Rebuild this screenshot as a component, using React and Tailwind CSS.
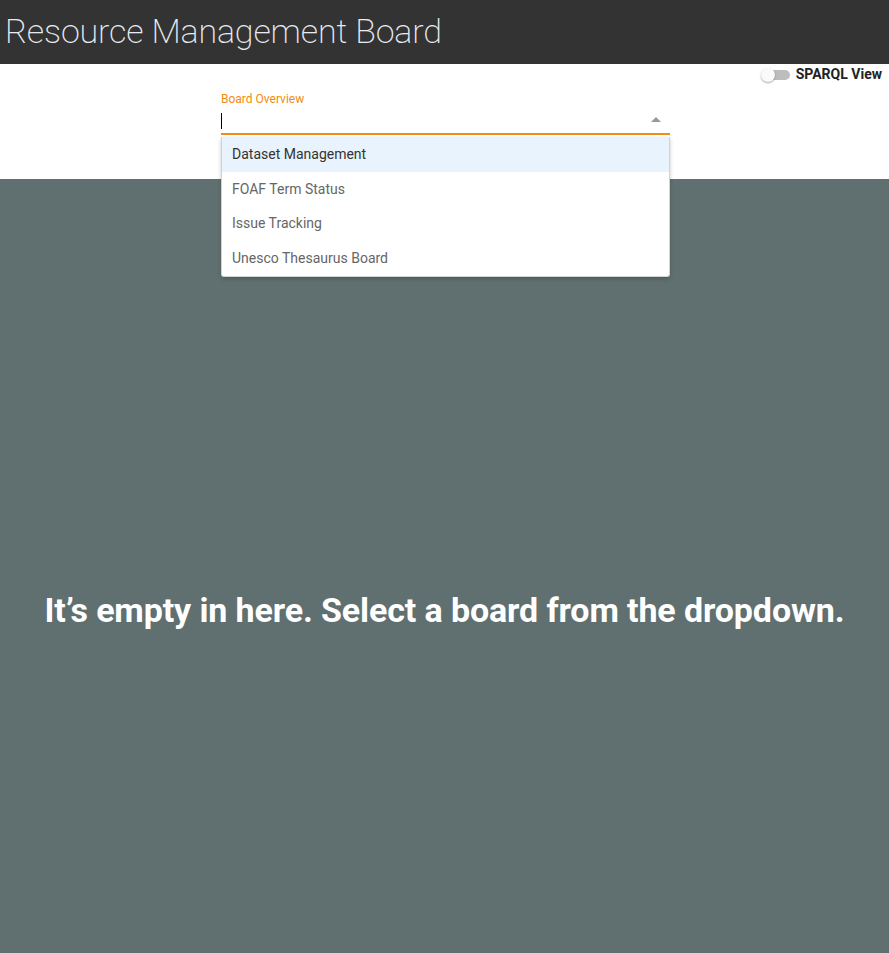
import React, { useState } from "react"

const boards = [
  "Dataset Management",
  "FOAF Term Status",
  "Issue Tracking",
  "Unesco Thesaurus Board",
]

function Toggle({ on, onChange }) {
  return (
    <button onClick={() => onChange(!on)} className="relative w-[30px] h-[16px] flex items-center">
      <span className="block w-[28px] h-[10px] ml-[1px] rounded-full bg-[#bdbdbd]" />
      <span className="absolute left-0 top-[1px] w-[14px] h-[14px] rounded-full bg-[#fafafa] shadow-[0_1px_2px_rgba(0,0,0,0.35)]" />
    </button>
  )
}

export default function App() {
  const [sparql, setSparql] = useState(false)
  const [hovered, setHovered] = useState(0)

  return (
    <div className="min-h-[953px] flex flex-col font-['Roboto',sans-serif] bg-[#607070]">
      <header className="h-16 bg-[#333333] flex items-center px-[5px]">
        <h1 className="text-[34px] font-extralight text-[#e8ecf2] tracking-[-0.15px] leading-none pb-[2px]">
          Resource Management Board
        </h1>
      </header>

      <div className="relative bg-white h-[115px]">
        <div className="absolute right-[7px] top-0 flex items-center gap-[5px]">
          <Toggle on={sparql} onChange={setSparql} />
          <span className="text-[14px] font-bold text-[#222]">SPARQL View</span>
        </div>

        <div className="relative ml-[221px] w-[449px] pt-[28px]">
          <label className="block text-[12px] leading-[14px] text-[#f28c0f]">Board Overview</label>
          <div className="h-[29px] flex items-center justify-between border-b-2 border-[#f28c0f]">
            <span className="w-px h-[16px] bg-black mt-[2px]" />
            <span className="mr-[9px] w-0 h-0 border-l-[5px] border-r-[5px] border-b-[5px] border-l-transparent border-r-transparent border-b-[#999]" />
          </div>

          <ul className="absolute left-0 top-[73px] w-full bg-white border border-[#cfd4d4] border-t-0 rounded-b-[3px] shadow-[0_2px_4px_rgba(0,0,0,0.2)] z-10">
            {boards.map((b, i) => (
              <li
                key={b}
                onMouseEnter={() => setHovered(i)}
                className={`h-[34.7px] flex items-center px-[10px] text-[14px] cursor-pointer ${hovered === i ? "bg-[#e9f3fd] text-[#333]" : "text-[#666]"}`}
              >
                {b}
              </li>
            ))}
          </ul>
        </div>
      </div>

      <main className="flex-1 flex items-center justify-center pt-[88px]">
        <p className="text-[34px] font-bold text-white tracking-[-0.12px]">
          It’s empty in here. Select a board from the dropdown.
        </p>
      </main>
    </div>
  )
}
